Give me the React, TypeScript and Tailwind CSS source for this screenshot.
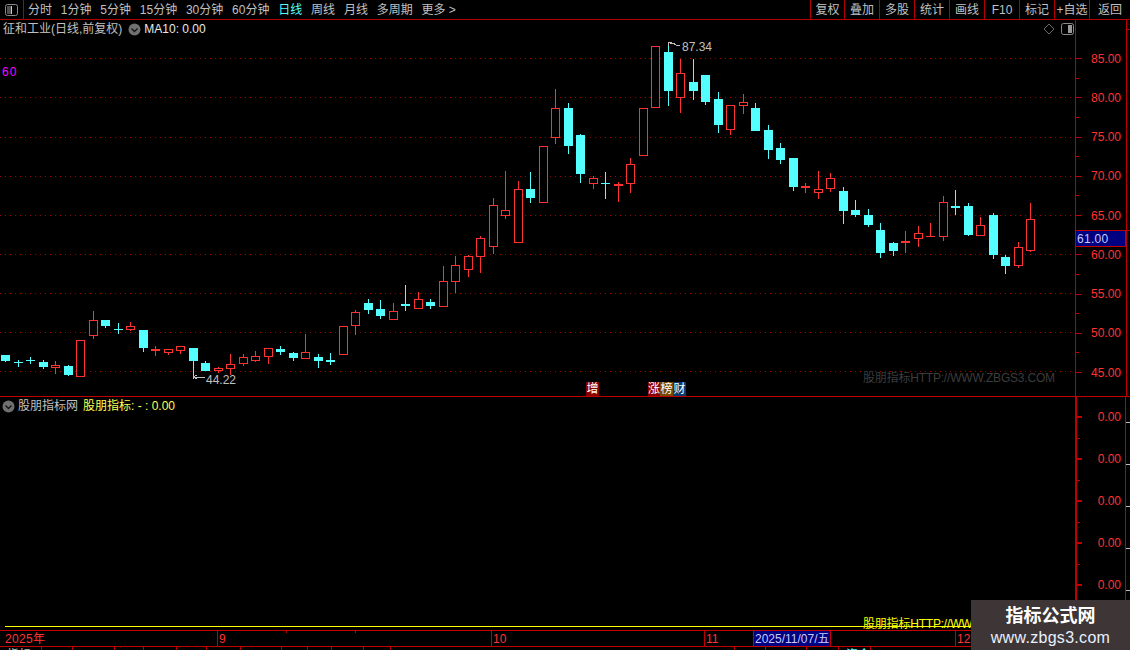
const periods = ["分时", "1分钟", "5分钟", "15分钟", "30分钟", "60分钟", "日线", "周线", "月线", "多周期", "更多 >"];
const tools = ["复权", "叠加", "多股", "统计", "画线", "F10", "标记", "+自选", "返回"];
const prices = ["85.00", "80.00", "75.00", "70.00", "65.00", "60.00", "55.00", "50.00", "45.00"];
const gridLines = [58, 97, 137, 176, 215, 254, 293, 332, 371];
const tabStops = [42, 31, 42, 29, 33, 30, 34, 41, 26, 24, 32, 27, 344, 31, 41, 32, 32, 259];

// top, bottom, wick top, wick bottom, colour
type Candle = [number, number, number, number, "r" | "c"];
const candles: Candle[] = [
  [355, 361, 355, 362, "c"], [362, 363, 360, 367, "c"], [360, 361, 357, 364, "c"], [362, 367, 360, 369, "c"],
  [365, 368, 361, 374, "r"], [366, 375, 365, 376, "c"], [340, 377, 340, 377, "r"], [320, 336, 311, 339, "r"],
  [320, 326, 320, 328, "c"], [329, 330, 323, 334, "c"], [326, 330, 322, 331, "r"], [330, 348, 330, 352, "c"],
  [349, 351, 346, 356, "r"], [349, 353, 349, 355, "r"], [346, 351, 346, 354, "r"], [348, 361, 348, 379, "c"],
  [363, 371, 361, 371, "c"], [368, 371, 367, 373, "r"], [364, 369, 354, 375, "r"], [357, 364, 354, 366, "r"],
  [356, 361, 351, 362, "r"], [348, 357, 348, 364, "r"], [349, 352, 346, 355, "c"], [353, 358, 352, 361, "c"],
  [352, 359, 334, 359, "r"], [357, 361, 354, 368, "c"], [360, 362, 353, 365, "c"], [326, 355, 326, 355, "r"],
  [312, 326, 310, 335, "r"], [303, 310, 299, 314, "c"], [309, 316, 300, 319, "c"], [311, 320, 303, 320, "r"],
  [304, 306, 285, 311, "c"], [299, 309, 292, 309, "r"], [302, 306, 299, 309, "c"], [281, 307, 266, 307, "r"],
  [265, 282, 256, 293, "r"], [256, 270, 255, 277, "r"], [238, 257, 236, 273, "r"], [205, 247, 198, 254, "r"],
  [210, 216, 171, 219, "r"], [189, 243, 181, 243, "r"], [189, 198, 172, 203, "c"], [146, 203, 146, 203, "r"],
  [108, 138, 89, 144, "r"], [108, 146, 103, 154, "c"], [135, 174, 134, 183, "c"], [178, 184, 176, 189, "r"],
  [183, 184, 172, 199, "c"], [184, 186, 182, 202, "r"], [164, 184, 158, 193, "r"], [108, 156, 108, 156, "r"],
  [46, 108, 46, 108, "r"], [52, 91, 43, 106, "c"], [73, 98, 59, 113, "r"], [82, 91, 59, 100, "c"],
  [75, 102, 75, 105, "c"], [99, 125, 92, 133, "c"], [105, 130, 105, 135, "r"], [102, 106, 94, 114, "r"],
  [108, 131, 103, 131, "c"], [130, 150, 125, 159, "c"], [148, 160, 143, 164, "c"], [158, 187, 158, 191, "c"],
  [186, 188, 183, 193, "r"], [189, 193, 171, 199, "r"], [178, 189, 173, 192, "r"], [191, 211, 187, 224, "c"],
  [210, 215, 200, 217, "c"], [215, 225, 209, 227, "c"], [230, 253, 223, 258, "c"], [243, 251, 242, 256, "c"],
  [241, 243, 231, 253, "r"], [233, 239, 226, 247, "r"], [236, 237, 223, 237, "r"], [202, 237, 196, 241, "r"],
  [206, 208, 190, 215, "c"], [206, 235, 203, 236, "c"], [225, 236, 217, 236, "r"], [215, 255, 213, 259, "c"],
  [257, 266, 255, 274, "c"], [247, 266, 242, 268, "r"], [219, 251, 203, 252, "r"],
];

function CircleChevron() {
  return (
    <svg width="13" height="13" viewBox="0 0 13 13" className="shrink-0">
      <circle cx="6.5" cy="6.5" r="6" fill="#707070" />
      <path d="M3.5 5.5 L6.5 8.5 L9.5 5.5" fill="none" stroke="#151515" strokeWidth="1.4" />
    </svg>
  );
}

function PanelIcon({ side }: { side: "left" | "right" }) {
  return (
    <svg width="13" height="12" viewBox="0 0 13 12" className="shrink-0">
      <rect x="0.5" y="0.5" width="12" height="11" rx="2" fill="none" stroke="#8a8a8a" />
      {side === "left" ? (
        <>
          <rect x="2" y="2" width="4" height="8" fill="#505050" />
          <rect x="6" y="2" width="1" height="8" fill="#c8c8c8" />
        </>
      ) : (
        <rect x="7" y="2" width="4" height="8" fill="#9a9a9a" />
      )}
    </svg>
  );
}

function CandleChart() {
  return (
    <svg className="absolute inset-0" width="1075" height="376" viewBox="0 20 1075 376" shapeRendering="crispEdges">
      {gridLines.map((y) => (
        <line key={y} x1="0" x2="1075" y1={y + 0.5} y2={y + 0.5} stroke="#a00000" strokeDasharray="1 4" />
      ))}
      {candles.map(([top, bottom, wickTop, wickBottom, color], i) => {
        const x = Math.floor(5.5 + i * 12.5);
        const fill = color === "c" ? "#54ffff" : "#ff3232";
        const flat = bottom - top <= 2;
        return (
          <g key={i}>
            <rect x={x} y={wickTop} width="1" height={wickBottom - wickTop} fill={fill} />
            {color === "c" || flat ? (
              <rect x={x - 4} y={top} width="9" height={Math.max(bottom - top, 1)} fill={fill} />
            ) : (
              <rect x={x - 3.5} y={top + 0.5} width="8" height={bottom - top - 1} fill="#000" stroke={fill} />
            )}
          </g>
        );
      })}
      {/* high and low markers */}
      <path d="M668 42 h4 M668 42 v4 M670 44 l3 -1 l3 2 l4 0" fill="none" stroke="#c0c0c0" />
      <path d="M193 377 h12 M193 377 l4 -2 M193 377 l4 2" fill="none" stroke="#c0c0c0" />
    </svg>
  );
}

function AxisTick({ wide, thick }: { wide: boolean; thick?: boolean }) {
  return <div className={wide ? (thick ? "w-[5px] h-[2px] bg-[#c00000]" : "w-[6px] h-px bg-[#c00000]") : "w-[3px] h-px bg-[#c00000]"} />;
}

function TabRow() {
  return (
    <div className="flex h-[3px] overflow-hidden">
      {tabStops.map((w, i) => (
        <div key={i} style={{ width: w }} className="shrink-0 border-r border-[#c00000] pl-[7px] text-xs leading-4 text-[#c0c0c0]">
          {i === 0 ? "指标" : i === 16 ? <span className="text-[#54ffff]">资金</span> : ""}
        </div>
      ))}
    </div>
  );
}

export default function App() {
  return (
    <div className="relative flex h-[650px] w-[1130px] flex-col overflow-hidden bg-black font-['Liberation_Sans','Noto_Sans_CJK_SC',sans-serif] text-xs text-[#c0c0c0]">
      {/* top toolbar */}
      <div className="flex h-5 shrink-0 items-center border-b border-[#b00000]">
        <div className="flex h-full w-6 items-center justify-center border-r border-[#b00000]">
          <PanelIcon side="left" />
        </div>
        <div className="ml-1 flex gap-[8.8px]">
          {periods.map((p) => (
            <span key={p} className={p === "日线" ? "text-[#54ffff]" : ""}>{p}</span>
          ))}
        </div>
        <div className="ml-auto flex h-full">
          {tools.map((t) => (
            <div key={t} className={`flex h-full items-center justify-center border-l border-[#b00000] ${t === "返回" ? "w-[41px]" : t === "复权" ? "w-[34px]" : "w-[35px]"}`}>
              {t}
            </div>
          ))}
        </div>
      </div>

      {/* price pane */}
      <div className="flex h-[377px] shrink-0 border-b border-[#c00000]">
        <div className="relative w-[1075px] shrink-0">
          <CandleChart />
          <div className="absolute left-[3px] top-[1px] flex items-center">
            <span>征和工业(日线,前复权)</span>
            <span className="ml-[6px]"><CircleChevron /></span>
            <span className="ml-[3px] text-[#e8e8e8]">MA10: 0.00</span>
          </div>
          <div className="absolute left-[2px] top-[44px] tracking-[1px] text-[#ff00ff]">60</div>
          <div className="absolute right-[1px] top-[3px] flex items-center gap-[6px]">
            <svg width="12" height="12" viewBox="0 0 12 12">
              <path d="M6 1 L11 6 L6 11 L1 6 Z" fill="none" stroke="#6a6a6a" />
            </svg>
            <PanelIcon side="right" />
          </div>
          <div className="absolute left-[682px] top-[19px]">87.34</div>
          <div className="absolute left-[206px] top-[352px]">44.22</div>
          <div className="absolute left-[863px] top-[350px] whitespace-nowrap tracking-[-0.2px] text-[#3c3c3c]">股朋指标HTTP://WWW.ZBGS3.COM</div>
          <div className="absolute left-[586px] top-[362px] flex h-[14px] w-[13px] items-center justify-center bg-[#8a0000] text-white">增</div>
          <div className="absolute left-[648px] top-[362px] flex h-[14px] text-white">
            <span className="flex w-[12px] items-center justify-center bg-[#8a0000]">涨</span>
            <span className="flex w-[13px] items-center justify-center bg-[#7a4a00]">榜</span>
            <span className="flex w-[13px] items-center justify-center bg-[#0a3a6e]">财</span>
          </div>
        </div>
        <div className="relative flex w-[51px] shrink-0 flex-col border-l border-[#c00000] pt-[28.7px] text-[#ff3232]">
          {prices.map((p, i) => (
            <div key={p}>
              {i > 0 && (
                <div className="flex h-[19.625px] items-center"><AxisTick wide={false} /></div>
              )}
              <div className="flex h-[19.625px] items-center pr-[5px]">
                <AxisTick wide />
                <span className="ml-auto">{p}</span>
              </div>
            </div>
          ))}
          <div className="absolute -left-px top-[210px] flex h-[17px] w-[51px] items-center border border-[#c00000] bg-[#000080] pl-[1px] tracking-[0.3px] text-[#c8c8ff]">
            61.00
          </div>
        </div>
        <div className="flex w-1 shrink-0 flex-col gap-[200px] border-l border-[#c00000] pt-[9px]">
          <div className="h-px bg-[#c00000]" />
          <div className="h-px bg-[#c00000]" />
        </div>
      </div>

      {/* indicator pane */}
      <div className="flex h-[233px] shrink-0">
        <div className="relative w-[1075px] shrink-0">
          <div className="absolute left-[2px] top-[1px] flex items-center">
            <CircleChevron />
            <span className="ml-[3px]">股朋指标网</span>
            <span className="ml-[5px] text-[#ffff54]">股朋指标: - : 0.00</span>
          </div>
          <div className="absolute left-[863px] top-[219px] w-[108px] overflow-hidden whitespace-nowrap tracking-[-0.2px] text-[#ffff00]">股朋指标HTTP://WWW</div>
          <div className="absolute bottom-[3px] left-[5px] right-0 h-px bg-[#ffff00]" />
        </div>
        <div className="flex w-[51px] shrink-0 flex-col border-l-2 border-r border-[#c00000] pt-[9.5px] text-[#ff3232]">
          {[0, 1, 2, 3, 4].map((i) => (
            <div key={i}>
              <div className="flex h-[21px] items-center pr-[4px]">
                <AxisTick wide thick />
                <span className="ml-auto">0.00</span>
              </div>
              {i < 4 && (
                <div className="flex h-[21px] items-center"><AxisTick wide={false} /></div>
              )}
            </div>
          ))}
        </div>
        <div className="flex w-1 shrink-0 flex-col gap-[41px] pt-[25px]">
          {[0, 1, 2, 3, 4].map((i) => (
            <div key={i} className="h-px bg-[#c0c0c0]" />
          ))}
        </div>
      </div>

      {/* date bar */}
      <div className="flex h-[17px] shrink-0 border-y border-[#c00000] leading-4 text-[#ff3232]">
        <div className="w-[217px] shrink-0 pl-[5px] tracking-[0.3px]">2025年</div>
        <div className="relative w-[274px] shrink-0 border-l border-[#c00000] pl-[1px]">
          9
          <div className="absolute left-[68px] top-0 h-[2px] w-px bg-[#c00000]" />
          <div className="absolute left-[137px] top-0 h-[2px] w-px bg-[#c00000]" />
        </div>
        <div className="w-[213px] shrink-0 border-l border-[#c00000] pl-[1px]">10</div>
        <div className="w-[49px] shrink-0 border-l border-[#c00000] pl-[1px]">11</div>
        <div className="w-[78px] shrink-0 border-x border-[#c00000] bg-[#000080] pl-[1px] text-[#c8c8ff]">2025/11/07/五</div>
        <div className="w-[124px] shrink-0"></div>
        <div className="flex-1 border-l border-[#c00000] pl-[1px]">12</div>
      </div>

      <TabRow />

      {/* site watermark */}
      <div className="absolute bottom-0 right-0 flex h-[50px] w-[159px] flex-col items-center justify-center bg-[#3e3636] pt-[2px]">
        <div className="text-lg font-bold leading-[24px] text-white">指标公式网</div>
        <div className="text-base leading-[20px] tracking-[0.3px] text-[#e8f0ff]">www.zbgs3.com</div>
      </div>
    </div>
  );
}
